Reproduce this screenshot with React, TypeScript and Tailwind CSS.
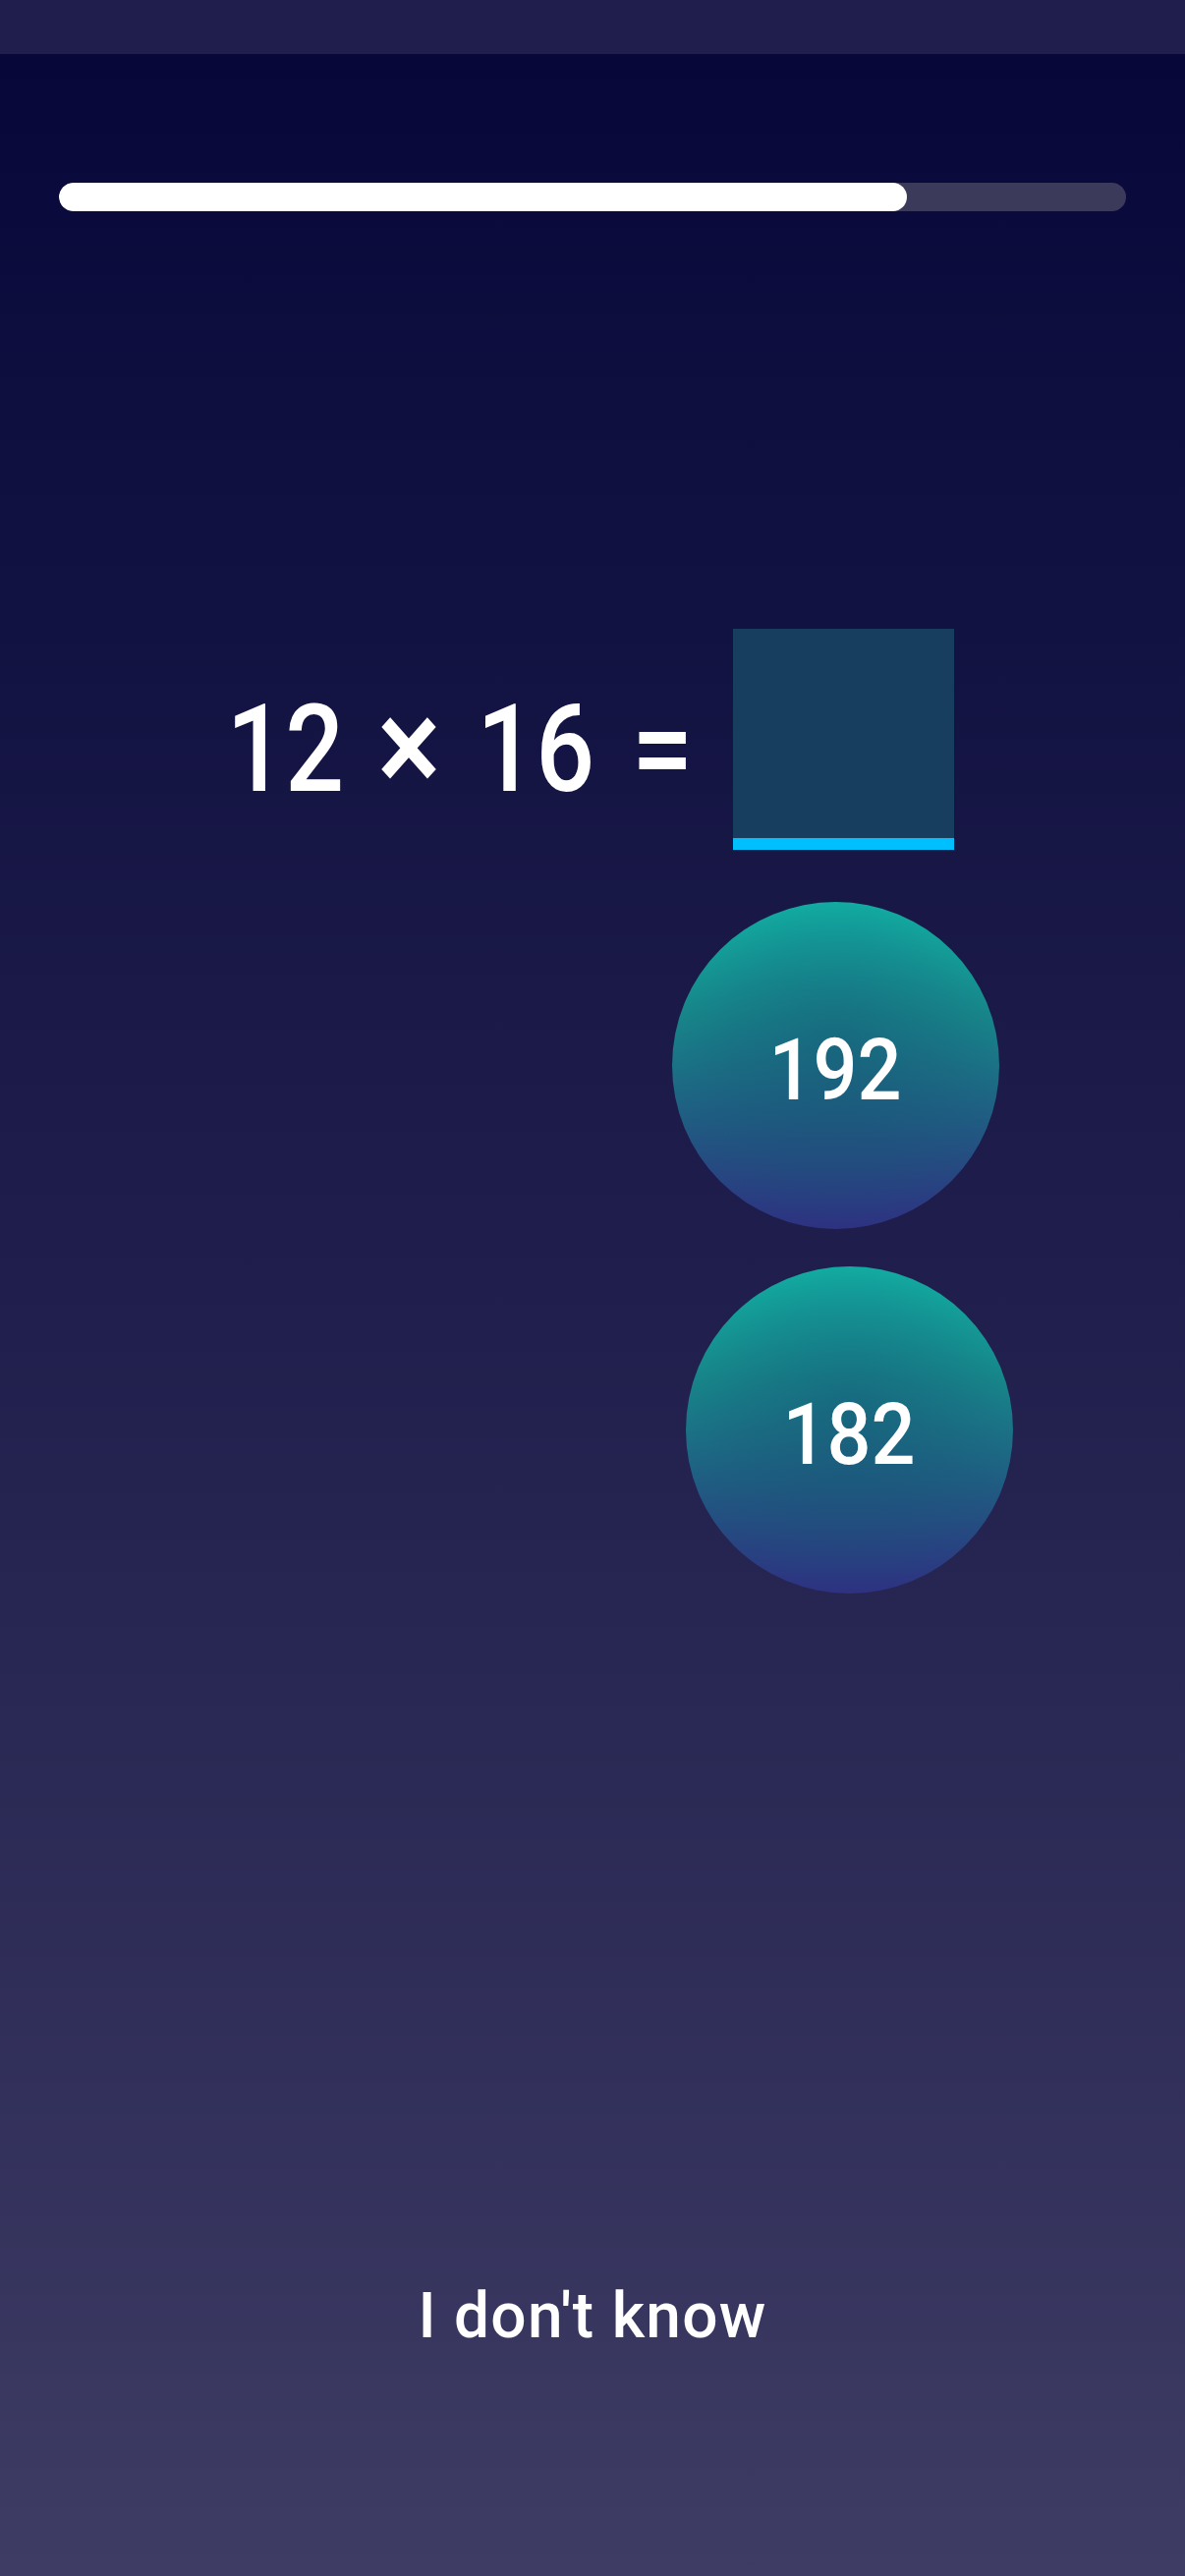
import React from "react";

const bubbles = [
    { value: "192", offset: "ml-[684px] mt-[53px]" },
    { value: "182", offset: "ml-[698px] mt-[38px]" },
];

export default function App() {
    const progress = 79.5;

    return (
        <div className="flex flex-col w-full min-h-[2622px] bg-gradient-to-b from-[#070639] via-[#201e4c] to-[#3e3c64] font-['Roboto',sans-serif] text-white">
            {/* status bar */}
            <div className="h-[55px] w-full bg-[#201e4d]"></div>

            {/* progress */}
            <div className="mx-[60px] mt-[131px] h-[29px] rounded-full bg-[#3c3a5b] overflow-hidden">
                <div className="h-full rounded-full bg-white" style={{ width: `${progress}%` }}></div>
            </div>

            {/* equation */}
            <div className="mt-[425px] flex items-center justify-center pr-[14px] font-medium">
                <div className="flex items-center h-[225px] pt-[20px]">
                    <span className="w-[112px] text-center text-[124px] leading-none scale-x-[0.85]">12</span>
                    <span className="ml-[47px] w-[56px] text-center text-[136px] leading-none scale-x-[0.9] -mt-[6px]">×</span>
                    <span className="ml-[40px] w-[110px] text-center text-[124px] leading-none scale-x-[0.85]">16</span>
                    <span className="ml-[53px] w-[54px] text-center text-[124px] leading-none scale-x-[0.9]">=</span>
                </div>
                <div className="ml-[52px] w-[225px] h-[225px] flex flex-col bg-[#173e5e]">
                    <div className="flex-1"></div>
                    <div className="h-[12px] bg-[#00bfff]"></div>
                </div>
            </div>

            {/* answer bubbles */}
            {bubbles.map((b, idx) => (
                <div
                    key={idx}
                    className={`${b.offset} w-[333px] h-[333px] rounded-full flex items-center justify-center bg-[radial-gradient(ellipse_at_50%_45%,rgba(22,80,115,0.45)_0%,rgba(22,80,115,0.2)_45%,rgba(20,170,160,0.0)_72%),linear-gradient(to_bottom,#11b6a7_0%,#17868a_35%,#1f5e82_65%,#2e3181_100%)]`}
                >
                    <span className="text-[88px] font-medium leading-none mt-[8px] scale-x-[0.9]">{b.value}</span>
                </div>
            ))}

            {/* skip */}
            <div className="mt-auto pb-[224px] flex justify-center">
                <span className="text-[64px] font-medium leading-[80px] tracking-[0.02em]">I don't know</span>
            </div>
        </div>
    );
}
